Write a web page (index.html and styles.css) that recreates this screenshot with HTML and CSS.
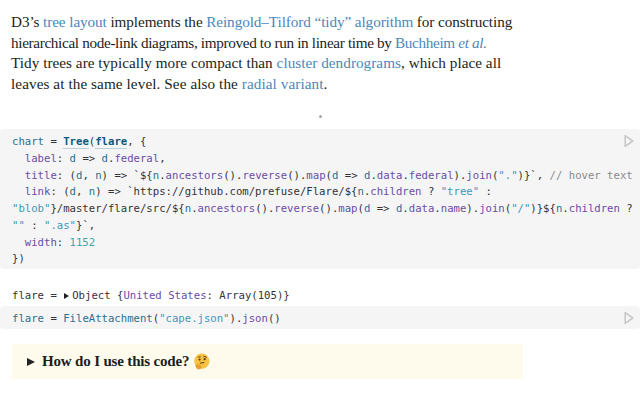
FILE: index.html
```html
<!DOCTYPE html>
<html lang="en">
<head>
<meta charset="utf-8">
<title>Tree layout</title>
<link rel="stylesheet" href="styles.css">
</head>
<body>
<div class="prose">
<p class="l1">D3’s <a>tree layout</a> implements the <a>Reingold–Tilford “tidy” algorithm</a> for constructing</p>
<p class="l2">hierarchical node-link diagrams, improved to run in linear time by <a>Buchheim <i>et al.</i></a></p>
<p class="l3">Tidy trees are typically more compact than <a>cluster dendrograms</a>, which place all</p>
<p class="l4">leaves at the same level. See also the <a>radial variant</a>.</p>
</div>
<div class="dot-row"><span class="dot"></span></div>
<div class="cell cell-chart">
<div class="code">
<div class="line"><span class="def">chart</span> = <span class="ref">Tree</span>(<span class="ref">flare</span>, {</div>
<div class="line">  <span class="prop">label</span>: <span class="def">d</span> =&gt; <span class="def">d</span>.<span class="prop">federal</span>,</div>
<div class="line">  <span class="prop">title</span>: (<span class="def">d</span>, <span class="def">n</span>) =&gt; `${<span class="def">n</span>.<span class="prop">ancestors</span>().<span class="prop">reverse</span>().<span class="prop">map</span>(<span class="def">d</span> =&gt; <span class="def">d</span>.<span class="prop">data</span>.<span class="prop">federal</span>).<span class="prop">join</span>(<span class="str">"."</span>)}`, <span class="cmt">// hover text</span></div>
<div class="line">  <span class="prop">link</span>: (<span class="def">d</span>, <span class="def">n</span>) =&gt; `https://github.com/prefuse/Flare/${<span class="def">n</span>.<span class="prop">children</span> ? <span class="str">"tree"</span> :</div>
<div class="line"><span class="str">"blob"</span>}/master/flare/src/${<span class="def">n</span>.<span class="prop">ancestors</span>().<span class="prop">reverse</span>().<span class="prop">map</span>(<span class="def">d</span> =&gt; <span class="def">d</span>.<span class="prop">data</span>.<span class="prop">name</span>).<span class="prop">join</span>(<span class="str">"/"</span>)}${<span class="def">n</span>.<span class="prop">children</span> ?</div>
<div class="line"><span class="str">""</span> : <span class="str">".as"</span>}`,</div>
<div class="line">  <span class="prop">width</span>: <span class="num">1152</span></div>
<div class="line">})</div>
</div>
<svg class="play" viewBox="0 0 10 14"><path d="M1.2 1.6 L8.8 7 L1.2 12.4 Z"/></svg>
</div>
<div class="output">flare = <span class="tri"></span>Object {<span class="key">United States</span>: Array(105)}</div>
<div class="cell cell-flare">
<div class="code"><div class="line"><span class="def">flare</span> = <span class="def">FileAttachment</span>(<span class="str">"cape.json"</span>).<span class="prop">json</span>()</div></div>
<svg class="play" viewBox="0 0 10 14"><path d="M1.2 1.6 L8.8 7 L1.2 12.4 Z"/></svg>
</div>
<div class="note"><span class="note-tri"></span><b>How do I use this code?</b>
<svg class="emoji" viewBox="0 0 16 16"><circle cx="8.3" cy="7.6" r="7.2" fill="#f6c343"/><path d="M4.6 4.2 Q6 3 7.4 3.9 M9.8 3.4 Q11.6 3 12.8 4.4" stroke="#7a4a12" stroke-width="1" fill="none"/><circle cx="6.2" cy="6.2" r="1" fill="#5b3a14"/><circle cx="11" cy="5.8" r="1" fill="#5b3a14"/><path d="M6.4 9.6 L10.6 8.8" stroke="#7a4a12" stroke-width="1.1"/><path d="M2.4 11.4 Q4 9.8 7 11.2 L8.2 13 Q7.8 15.6 4.8 15.4 Q2.4 14.6 2.4 11.4 Z" fill="#e8a02c"/></svg></div>
</body>
</html>
```
FILE: styles.css
```css
html, body {
  margin: 0;
  padding: 0;
  background: #fff;
  height: 400px;
  overflow: hidden;
}
body {
  padding-top: 12px;
  box-sizing: border-box;
}
.prose {
  margin-left: 11px;
  font: 15.2px/20.6px "Liberation Serif", serif;
  color: #1b1e23;
  white-space: nowrap;
}
.prose p { margin: 0; }
.prose a { color: #4a88bb; }
.l1 { letter-spacing: -0.08px; }
.l2 { letter-spacing: -0.33px; }
.l3 { letter-spacing: 0.04px; }
.l4 { letter-spacing: 0.09px; }
.dot-row {
  display: flex;
  justify-content: center;
  height: 5px;
  margin-top: 21px;
}
.dot {
  width: 3px;
  height: 3px;
  border-radius: 50%;
  background: #a5a5a5;
}
.cell {
  display: flex;
  background: #f5f5f5;
  border-radius: 4px;
  padding: 5px 6px 3px 12px;
}
.cell-chart {
  margin-top: 9px;
  height: 132px;
}
.cell-flare {
  height: 15px;
}
.code {
  flex: 1;
  min-width: 0;
  font: 10.63px/16.7px "DejaVu Sans Mono", monospace;
  color: #333338;
}
.line { white-space: pre; }
.def { color: #2a6f8f; }
.ref {
  color: #0b5a78;
  font-weight: bold;
  border-bottom: 1px solid #bcd0dc;
}
.prop { color: #6a4ca8; }
.str { color: #3f97bb; }
.num { color: #3fa5a5; }
.cmt { color: #8a8a8a; }
.play {
  width: 10px;
  height: 14px;
  flex: none;
  fill: none;
  stroke: #c9c9c9;
  stroke-width: 1.6;
  stroke-linejoin: round;
}
.output {
  margin: 18px 0 0 12px;
  height: 19px;
  font: 10.63px/17px "DejaVu Sans Mono", monospace;
  color: #333338;
}
.tri {
  display: inline-block;
  width: 0;
  height: 0;
  margin: 0 3px 0 1px;
  border-left: 5px solid #222;
  border-top: 3px solid transparent;
  border-bottom: 3px solid transparent;
}
.key { color: #6a4ca8; }
.note {
  display: flex;
  align-items: center;
  box-sizing: border-box;
  width: 511px;
  height: 35px;
  margin: 15px 0 0 12px;
  padding-left: 15px;
  background: #fefaec;
  font: 15px "Liberation Serif", serif;
  color: #1b1e23;
}
.note b { letter-spacing: -0.17px; }
.note-tri {
  width: 0;
  height: 0;
  margin-right: 7px;
  border-left: 8px solid #222;
  border-top: 4px solid transparent;
  border-bottom: 4px solid transparent;
}
.emoji {
  width: 17px;
  height: 17px;
  margin-left: 4px;
}
```
